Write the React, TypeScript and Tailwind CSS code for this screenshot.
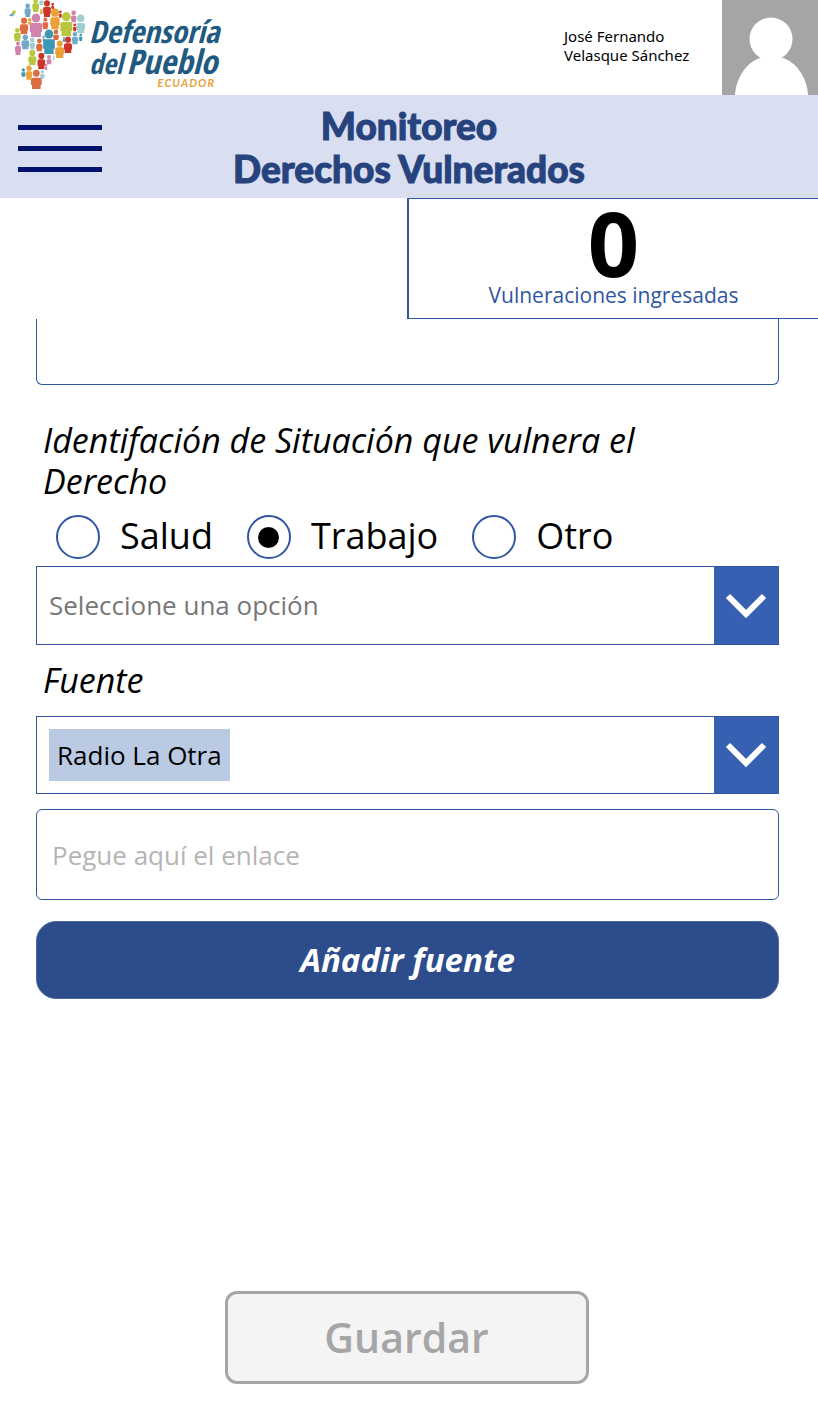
import { useRef, useState } from "react";

type Person = [cx: number, cy: number, r: number, top: number, bottom: number, width: number, color: string];

const BLUE = "#72a9c8";
const GREEN = "#b9c73e";
const SKY = "#a0cfd2";
const RED = "#cb3527";
const AMBER = "#eba13a";
const PINK = "#d283ac";
const CORAL = "#dc6d43";
const TEAL = "#3d97b5";

const people: Person[] = [
  [83, 18, 7, 25, 51, 18, BLUE],
  [107, 3, 7, 10, 36, 20, GREEN],
  [124, -4, 5, 2, 15, 13, SKY],
  [141, 10, 9, 20, 51, 23, RED],
  [158, 13, 4, 18, 27, 9, RED],
  [124, 32, 4, 36, 43, 8, AMBER],
  [165, 38, 12, 52, 88, 28, AMBER],
  [181, 36, 4, 42, 53, 9, RED],
  [199, 50, 13, 66, 108, 36, GREEN],
  [221, 39, 7, 47, 67, 16, PINK],
  [242, 55, 11, 69, 99, 26, SKY],
  [108, 54, 13, 69, 111, 37, PINK],
  [89, 59, 5, 65, 74, 10, AMBER],
  [72, 62, 9, 73, 102, 25, CORAL],
  [136, 59, 6, 67, 88, 17, CORAL],
  [224, 75, 4, 81, 94, 10, RED],
  [52, 91, 7, 99, 124, 20, GREEN],
  [76, 112, 8, 121, 148, 23, BLUE],
  [54, 131, 6, 138, 165, 18, PINK],
  [97, 120, 7, 128, 148, 16, SKY],
  [118, 123, 7, 132, 154, 19, CORAL],
  [131, 111, 4, 116, 123, 8, BLUE],
  [147, 102, 13, 118, 162, 35, TEAL],
  [168, 96, 7, 104, 120, 17, CORAL],
  [179, 131, 9, 142, 174, 27, AMBER],
  [204, 119, 9, 130, 159, 24, RED],
  [192, 114, 3, 118, 125, 8, TEAL],
  [225, 103, 7, 111, 133, 19, BLUE],
  [242, 105, 4, 110, 123, 10, TEAL],
  [97, 159, 9, 169, 195, 24, GREEN],
  [124, 168, 9, 178, 207, 23, RED],
  [147, 171, 6, 178, 193, 15, PINK],
  [161, 169, 3, 173, 180, 6, SKY],
  [138, 196, 4, 201, 210, 8, PINK],
  [127, 215, 5, 222, 237, 13, SKY],
  [70, 210, 5, 217, 230, 12, TEAL],
  [87, 205, 8, 214, 239, 19, AMBER],
  [109, 220, 10, 233, 267, 32, CORAL],
];

function MapLogo() {
  return (
    <svg viewBox="0 0 255 288" className="h-24 w-[85px] shrink-0" aria-hidden="true">
      <path d="M37 34l7-4 4 6-4 7-8-1z" fill={GREEN} />
      <path d="M28 45l8-5 6 2-2 7-13-1z" fill={BLUE} />
      {people.map(([cx, cy, r, top, bottom, w, color], i) => {
        const h = w / 2;
        const k = Math.min(h * 0.5, 6);
        const d =
          `M${cx - h + k} ${top}H${cx + h - k}Q${cx + h} ${top} ${cx + h} ${top + k}` +
          `V${top + (bottom - top) * 0.65}H${cx + h - w * 0.1}V${bottom}` +
          `H${cx - h + w * 0.1}V${top + (bottom - top) * 0.65}H${cx - h}V${top + k}` +
          `Q${cx - h} ${top} ${cx - h + k} ${top}Z`;
        return (
          <g key={i} fill={color}>
            <ellipse cx={cx} cy={cy} rx={r} ry={r * 1.05} />
            <path d={d} />
          </g>
        );
      })}
    </svg>
  );
}

function Chevron() {
  return (
    <svg viewBox="0 0 64 76" className="h-[76px] w-16" fill="none" stroke="white" strokeWidth="6" aria-hidden="true">
      <path d="M14 28l18 18 18-18" />
    </svg>
  );
}

export default function App() {
  const [situation, setSituation] = useState("Trabajo");
  const source = useRef<HTMLSelectElement>(null);

  return (
    <div className="flex min-h-screen flex-col bg-white font-['Open_Sans','Noto_Sans',sans-serif] text-black">
      <header className="flex h-[95px] overflow-hidden">
        <div className="flex flex-1">
          <MapLogo />
          <div className="pt-4 pl-1 font-['Open_Sans_Condensed','Noto_Sans_Condensed','Liberation_Sans_Narrow','Lato',sans-serif] font-semibold whitespace-nowrap italic text-[#215a80]">
            <div className="text-[31px] leading-[30px]">Defensoría</div>
            <div className="flex items-baseline gap-1">
              <span className="text-[28px] leading-[30px]">del</span>
              <span className="text-[34px] leading-[30px]">Pueblo</span>
            </div>
            <div className="pr-1 text-right font-['Lato',sans-serif] text-[11px] leading-[10px] font-bold tracking-widest text-[#e8a13c]">
              ECUADOR
            </div>
          </div>
        </div>
        <p className="w-[158px] self-center pb-1 font-['Noto_Sans',sans-serif] text-[15px] leading-[19px]">
          José Fernando
          <br />
          Velasque Sánchez
        </p>
        <svg viewBox="0 0 96 95" className="h-[95px] w-24" role="img" aria-label="Foto de perfil">
          <rect width="96" height="95" fill="#a5a5a5" />
          <circle cx="49" cy="39" r="21.5" fill="white" />
          <path d="M13 95C14 77 25 62 39 57.500H60C74 62 85 77 86 95Z" fill="white" />
        </svg>
      </header>

      <div className="grid h-[103px] grid-cols-[84px_1fr_84px] items-center bg-[#d9dff0] px-[18px]">
        <button type="button" aria-label="Menú" className="flex flex-col gap-4 pt-1">
          <span className="h-[5px] w-full bg-[#00126c]" />
          <span className="h-[5px] w-full bg-[#00126c]" />
          <span className="h-[5px] w-full bg-[#00126c]" />
        </button>
        <h1 className="text-center font-['Lato',sans-serif] text-[37px] leading-[43px] font-black text-[#26437e] [-webkit-text-stroke:1px_#26437e]">
          Monitoreo
          <br />
          Derechos Vulnerados
        </h1>
      </div>

      <section className="flex h-[121px] w-[411px] flex-col items-center self-end border-y border-l-2 border-[#3056a3]">
        <strong className="text-[90px] leading-[86px] font-bold">0</strong>
        <span className="text-[21px] leading-5 text-[#3056a3]">Vulneraciones ingresadas</span>
      </section>

      <main className="flex flex-1 flex-col pr-[39px] pl-9">
        <textarea
          aria-label="Descripción"
          className="h-[66px] resize-none rounded-b-md border border-t-0 border-[#3056a3] p-4 text-2xl"
        />

        <fieldset className="mt-[35px]">
          <legend className="pr-9 pl-[7px] text-[34px] leading-[41px] italic">Identifación de Situación que vulnera el Derecho</legend>
          <div className="flex gap-[34px] pt-[13px] pl-5">
            {["Salud", "Trabajo", "Otro"].map((name) => (
              <label key={name} className="flex h-11 items-center gap-5 text-4xl">
                <input
                  type="radio"
                  name="situacion"
                  checked={situation === name}
                  onChange={() => setSituation(name)}
                  className="grid size-11 appearance-none place-items-center rounded-full border-2 border-[#3056a3] checked:before:size-[21px] checked:before:rounded-full checked:before:bg-black"
                />
                <span className="pb-[2px]">{name}</span>
              </label>
            ))}
          </div>
        </fieldset>

        <div className="mt-[7px] grid h-[79px] grid-cols-[1fr_64px] border border-[#3056a3]">
          <select
            aria-label="Derecho vulnerado"
            defaultValue=""
            className="col-span-2 col-start-1 row-start-1 appearance-none px-3 text-[26px] text-[#777777]"
          >
            <option value="">Seleccione una opción</option>
          </select>
          <span className="pointer-events-none z-10 col-start-2 row-start-1 flex items-center bg-[#3860b2]">
            <Chevron />
          </span>
        </div>

        <label htmlFor="fuente" className="mt-[15px] px-[7px] text-[34px] leading-[41px] italic">
          Fuente
        </label>
        <div className="mt-[15px] flex h-[78px] items-center justify-between border border-[#3056a3] pl-3">
          <select
            ref={source}
            id="fuente"
            className="h-[52px] appearance-none bg-[#bacae3] px-2 text-[26px] [field-sizing:content]"
          >
            <option>Radio La Otra</option>
          </select>
          <button
            type="button"
            aria-label="Abrir lista de fuentes"
            onClick={() => source.current?.showPicker()}
            className="bg-[#3860b2]"
          >
            <Chevron />
          </button>
        </div>

        <input
          type="url"
          aria-label="Enlace"
          placeholder="Pegue aquí el enlace"
          className="mt-[15px] h-[91px] rounded-md border border-[#3056a3] px-[15px] text-[26px] placeholder:text-[#b5b5b5]"
        />

        <button
          type="button"
          className="mt-[21px] h-[78px] rounded-[20px] border border-[#4b68a2] bg-[#2c4c8c] text-[33px] font-bold text-white italic"
        >
          Añadir fuente
        </button>
      </main>

      <footer className="flex justify-center pr-[5px] pb-[34px]">
        <button
          type="button"
          disabled
          className="h-[93px] w-[364px] rounded-xl border-[3px] border-[#a6a6a6] bg-[#f4f4f4] text-[41px] font-semibold text-[#a6a6a6]"
        >
          Guardar
        </button>
      </footer>
    </div>
  );
}
